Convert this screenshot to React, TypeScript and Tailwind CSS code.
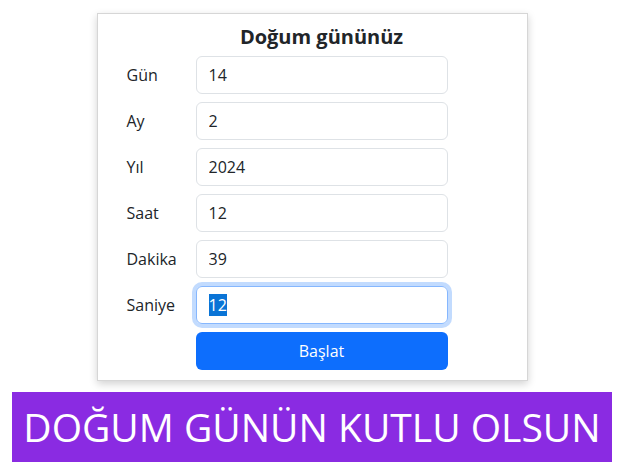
import React from "react";

const rows = [
  { label: "Gün", value: "14" },
  { label: "Ay", value: "2" },
  { label: "Yıl", value: "2024" },
  { label: "Saat", value: "12" },
  { label: "Dakika", value: "39" },
];

function App() {
  return (
    <div className="min-h-[472px] bg-white pt-[13px] font-['Open_Sans',sans-serif] text-[#212529]">
      {/* form card */}
      <div className="mx-auto w-[431px] border border-[#d6d6d6] bg-white pl-[29px] pt-[11px] pb-[10px] shadow-[0_3px_8px_rgba(0,0,0,0.18)]">
        <div className="grid grid-cols-[69px_252px] gap-y-2">
          <div />
          <h5 className="mb-[-1px] text-center text-[20px] leading-[24px] font-bold">Doğum gününüz</h5>
          {rows.map((r) => (
            <React.Fragment key={r.label}>
              <label className="self-center text-[16px]">{r.label}</label>
              <input
                readOnly
                value={r.value}
                className="h-[38px] w-full rounded-[6px] border border-[#dee2e6] px-3 text-[16px] outline-none"
              />
            </React.Fragment>
          ))}
          <label className="self-center text-[16px]">Saniye</label>
          <div className="flex h-[38px] w-full items-center rounded-[6px] border border-[#86b7fe] px-3 text-[16px] shadow-[0_0_0_4px_rgba(13,110,253,0.25)]">
            <span className="bg-[#0a74d6] leading-[22px] text-white">12</span>
          </div>
          <div />
          <button className="h-[38px] w-full rounded-[6px] bg-[#0d6efd] text-[16px] text-white">Başlat</button>
        </div>
      </div>

      {/* banner */}
      <div className="mx-auto mt-[11px] flex h-[70px] w-[600px] items-center justify-center bg-[#8a2be2] text-[39px] text-white">
        DOĞUM GÜNÜN KUTLU OLSUN
      </div>
    </div>
  );
}

export default App;
